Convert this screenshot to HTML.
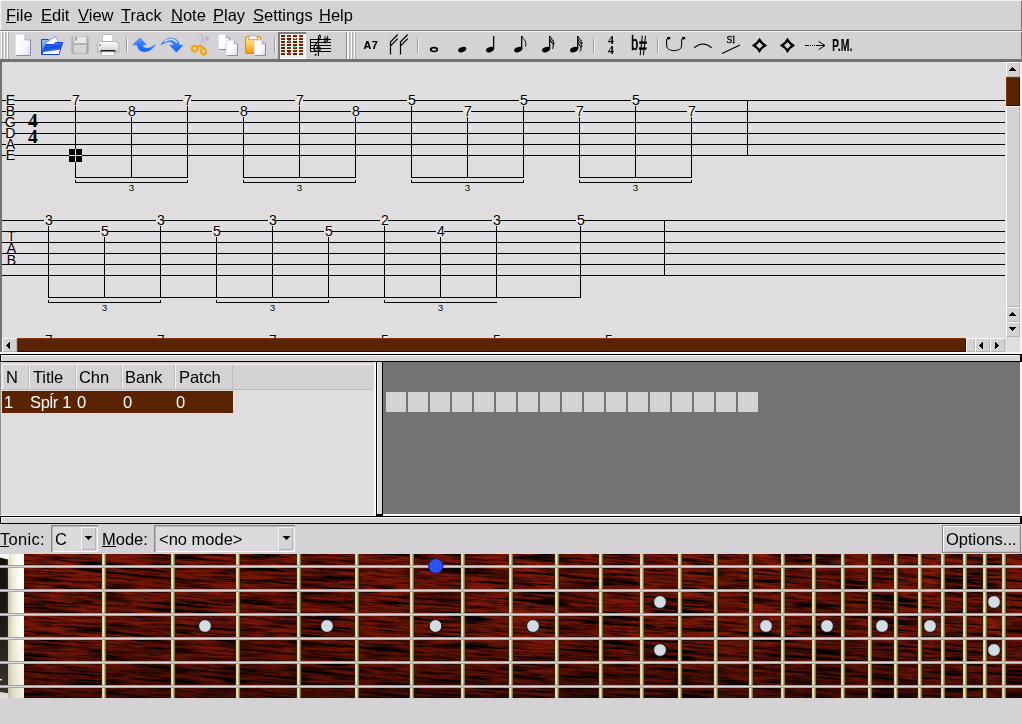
<!DOCTYPE html>
<html><head><meta charset="utf-8"><title>KGuitar</title>
<style>
html,body{margin:0;padding:0}
html{background:#d5d2d5}
body{width:1022px;height:724px;overflow:hidden;position:relative;background:#d5d2d5;
 font-family:"Liberation Sans",sans-serif;font-size:16.5px;color:#000;line-height:1}
.a{position:absolute}
.t{position:absolute;white-space:nowrap;transform-origin:0 0;line-height:20px;height:20px;will-change:transform}
.t u{text-decoration:none;background:linear-gradient(#000,#000) no-repeat 0 16px / 100% 1px}
svg{position:absolute;left:0;top:0;overflow:visible}
.btn{position:absolute;background:#d5d2d5;box-shadow:inset 1px 1px 0 #f4f3f4, inset -1px -1px 0 #b4b2b4}
</style></head><body>

<div class="a" style="left:0px;top:0px;width:1022px;height:1px;background:#f6f5f6;"></div>
<div class="a" style="left:0px;top:0px;width:1px;height:30px;background:#f6f5f6;"></div>
<div class="a" style="left:1021px;top:1px;width:1px;height:58px;background:#7d7d7b;"></div>
<div class="t" style="left:5.5px;top:5px"><u>F</u>ile</div>
<div class="t" style="left:41.1px;top:5px"><u>E</u>dit</div>
<div class="t" style="left:77.6px;top:5px"><u>V</u>iew</div>
<div class="t" style="left:121.2px;top:5px"><u>T</u>rack</div>
<div class="t" style="left:170.7px;top:5px"><u>N</u>ote</div>
<div class="t" style="left:212.7px;top:5px"><u>P</u>lay</div>
<div class="t" style="left:252.8px;top:5px"><u>S</u>ettings</div>
<div class="t" style="left:318.5px;top:5px"><u>H</u>elp</div>
<div class="a" style="left:0px;top:30px;width:1022px;height:1px;background:#7d7d7b;"></div>
<div class="a" style="left:0px;top:31px;width:1022px;height:1px;background:#f6f5f6;"></div>
<div class="a" style="left:1px;top:32px;width:1px;height:27px;background:#f6f5f6;"></div>
<div class="a" style="left:2px;top:32px;width:1px;height:27px;background:#aeacae;"></div>
<div class="a" style="left:4px;top:32px;width:1px;height:27px;background:#f6f5f6;"></div>
<div class="a" style="left:5px;top:32px;width:1px;height:27px;background:#aeacae;"></div>
<div class="a" style="left:7px;top:32px;width:1px;height:27px;background:#f6f5f6;"></div>
<div class="a" style="left:8px;top:32px;width:1px;height:27px;background:#aeacae;"></div>
<div class="a" style="left:346px;top:32px;width:1px;height:27px;background:#8a888a;"></div>
<div class="a" style="left:347px;top:32px;width:1px;height:27px;background:#f6f5f6;"></div>
<div class="a" style="left:348px;top:32px;width:1px;height:27px;background:#f6f5f6;"></div>
<div class="a" style="left:349px;top:32px;width:1px;height:27px;background:#aeacae;"></div>
<div class="a" style="left:351px;top:32px;width:1px;height:27px;background:#f6f5f6;"></div>
<div class="a" style="left:352px;top:32px;width:1px;height:27px;background:#aeacae;"></div>
<div class="a" style="left:354px;top:32px;width:1px;height:27px;background:#f6f5f6;"></div>
<div class="a" style="left:355px;top:32px;width:1px;height:27px;background:#aeacae;"></div>
<div class="a" style="left:126px;top:38px;width:1px;height:15px;background:#9a989a;"></div>
<div class="a" style="left:127px;top:38px;width:1px;height:15px;background:#f6f5f6;"></div>
<div class="a" style="left:274px;top:38px;width:1px;height:15px;background:#9a989a;"></div>
<div class="a" style="left:275px;top:38px;width:1px;height:15px;background:#f6f5f6;"></div>
<div class="a" style="left:417px;top:38px;width:1px;height:15px;background:#9a989a;"></div>
<div class="a" style="left:418px;top:38px;width:1px;height:15px;background:#f6f5f6;"></div>
<div class="a" style="left:593px;top:38px;width:1px;height:15px;background:#9a989a;"></div>
<div class="a" style="left:594px;top:38px;width:1px;height:15px;background:#f6f5f6;"></div>
<div class="a" style="left:657px;top:38px;width:1px;height:15px;background:#9a989a;"></div>
<div class="a" style="left:658px;top:38px;width:1px;height:15px;background:#f6f5f6;"></div>
<div class="a" style="left:278px;top:32px;width:28px;height:27px;background:#efeeef;box-shadow:inset 2px 2px 0 #7d7d7b, inset -1px -1px 0 #fff"></div>
<svg width="1022" height="62" viewBox="0 0 1022 62">
<defs>
<linearGradient id="gPage" x1="0" y1="0" x2="1" y2="1"><stop offset="0" stop-color="#ffffff"/><stop offset=".55" stop-color="#fbfaff"/><stop offset="1" stop-color="#dcdaec"/></linearGradient>
<linearGradient id="gFold" x1="0" y1="1" x2="1" y2="0"><stop offset="0" stop-color="#c8c6dc"/><stop offset="1" stop-color="#ffffff"/></linearGradient>
<linearGradient id="gFlap" x1="0" y1="0" x2="0.25" y2="1"><stop offset="0" stop-color="#7ab8ff"/><stop offset=".45" stop-color="#1048e0"/><stop offset=".72" stop-color="#2a6af0"/><stop offset=".8" stop-color="#eef0ff"/><stop offset="1" stop-color="#ffffff"/></linearGradient>
<linearGradient id="gBack" x1="0" y1="0" x2="0" y2="1"><stop offset="0" stop-color="#8cc4ff"/><stop offset="1" stop-color="#2060e8"/></linearGradient>
<linearGradient id="gFlop" x1="0" y1="0" x2="1" y2="1"><stop offset="0" stop-color="#bfbdbf"/><stop offset="1" stop-color="#9d9b9d"/></linearGradient>
<linearGradient id="gPrn" x1="0" y1="0" x2="0" y2="1"><stop offset="0" stop-color="#ffffff"/><stop offset="1" stop-color="#c9c9c9"/></linearGradient>
<linearGradient id="gArr" x1="0" y1="0" x2="0" y2="1"><stop offset="0" stop-color="#5aa4ff"/><stop offset=".5" stop-color="#2676ff"/><stop offset="1" stop-color="#1a62f4"/></linearGradient>
<linearGradient id="gClip" x1="0" y1="0" x2="0" y2="1"><stop offset="0" stop-color="#ffe680"/><stop offset=".45" stop-color="#ffd050"/><stop offset="1" stop-color="#f09208"/></linearGradient>
<linearGradient id="gBlade" x1="0" y1="0" x2="1" y2="0"><stop offset="0" stop-color="#ffffff"/><stop offset="1" stop-color="#a8a8c0"/></linearGradient>
</defs>
<path d="M15.5,34.5 H25 L30.5,40 V55.5 H15.5 Z" fill="url(#gPage)"/>
<path d="M30.5,40 V55.5 H15.8" fill="none" stroke="#8c8aa8" stroke-width="1"/>
<path d="M25,34.5 V40 H30.5 Z" fill="url(#gFold)" stroke="#a09eb8" stroke-width=".7"/>
<path d="M15.5,34.5 V55.2" fill="none" stroke="#e4e2f0" stroke-width="1"/>
<path d="M15.5,34.5 H25" fill="none" stroke="#e4e2f0" stroke-width="1"/>
<path d="M41.5,39.5 H48.5 L49.5,41.5 H57 V54.5 H41.5 Z" fill="url(#gBack)" stroke="#1448d8" stroke-width="1"/>
<path d="M45.5,42.8 L55.3,36.6 L59.2,42.4 L49,49 Z" fill="#fbfbff" stroke="#6f7ee0" stroke-width=".8"/>
<path d="M46,44.5 H53.5 L55.5,42.5 H62.6 L59,54.5 H41.8 Z" fill="url(#gFlap)" stroke="#1040d8" stroke-width="1"/>
<rect x="71.5" y="36.5" width="17" height="17" rx="1.6" fill="url(#gFlop)" stroke="#b3b1b3" stroke-width=".6"/>
<rect x="74" y="36.8" width="12.5" height="6.4" fill="#e9e7e9"/>
<rect x="75" y="37.2" width="2.2" height="3.4" fill="#a09ea0"/>
<rect x="73.8" y="45" width="12.6" height="8" fill="#d9d7d9"/>
<path d="M74,47.5 H86 M74,49.5 H86 M74,51.5 H86" stroke="#cfcdcf" stroke-width=".7"/>
<rect x="102.5" y="34.5" width="10.5" height="7.5" fill="#ffffff" stroke="#b5b3b5" stroke-width=".8"/>
<path d="M101.5,41.5 H114.5 C118,41.5 119,44 119,47 C119,51 118,53 115.5,53 H100.5 C98,53 97.3,51 97.3,47 C97.3,44 98,41.5 101.5,41.5 Z" fill="url(#gPrn)" stroke="#a3a1a3" stroke-width=".8"/>
<rect x="99" y="44" width="2" height="2" fill="#50d060"/>
<rect x="100.5" y="50" width="15" height="2.2" rx="1" fill="#1a1a1a"/>
<rect x="101.8" y="51.8" width="12.4" height="3.8" fill="#fafafa" stroke="#b5b3b5" stroke-width=".7"/>
<path d="M133,44.7 L139.8,37.9 L146.3,44.7 L142.3,44.7 C142.8,48.6 149,50.2 155,44.8 C150.5,53.5 138,54.5 137.2,44.7 Z" fill="url(#gArr)" stroke="#1f6cff" stroke-width=".6"/>
<path d="M161,45 C165,36.2 178.5,35.6 179.3,45.3 L183,45.3 L176.4,52.2 L169.8,45.3 L173.8,45.3 C173.2,41.2 167,40 161,45 Z" fill="url(#gArr)" stroke="#1f6cff" stroke-width=".6"/>
<path d="M165,41.3 C169,38.5 174.5,38.5 176.5,42.5" fill="none" stroke="#d8ecff" stroke-width="1.3" stroke-linecap="round"/>
<path d="M200.2,34.6 L202.3,34.8 L202.6,46.2 L200.4,46.6 Z" fill="url(#gBlade)" stroke="#9c9cb8" stroke-width=".5"/>
<path d="M207.4,36 L209,37.6 L201.6,47 L200.2,45.6 Z" fill="url(#gBlade)" stroke="#9c9cb8" stroke-width=".5"/>
<ellipse cx="194.6" cy="48.6" rx="2.9" ry="2.6" fill="none" stroke="#f7a400" stroke-width="2.1" transform="rotate(-25 194.6 48.6)"/>
<ellipse cx="203.4" cy="51.4" rx="2.4" ry="3.3" fill="none" stroke="#f7a400" stroke-width="2.1" transform="rotate(-15 203.4 51.4)"/>
<path d="M196.8,46.6 L201,45.4 L202.2,48.3" fill="none" stroke="#f7a400" stroke-width="2"/>
<path d="M218.5,34.5 H226 L229.5,38 V49.5 H218.5 Z" fill="url(#gPage)"/>
<path d="M229.5,38 V49.5 H218.8" fill="none" stroke="#8c8aa8" stroke-width="1"/>
<path d="M226,34.5 V38 H229.5 Z" fill="url(#gFold)" stroke="#a09eb8" stroke-width=".7"/>
<path d="M218.5,34.5 V49.2" fill="none" stroke="#e4e2f0" stroke-width="1"/>
<path d="M218.5,34.5 H226" fill="none" stroke="#e4e2f0" stroke-width="1"/>
<path d="M226.5,40.5 H234 L237.5,44 V55.5 H226.5 Z" fill="url(#gPage)"/>
<path d="M237.5,44 V55.5 H226.8" fill="none" stroke="#8c8aa8" stroke-width="1"/>
<path d="M234,40.5 V44 H237.5 Z" fill="url(#gFold)" stroke="#a09eb8" stroke-width=".7"/>
<path d="M226.5,40.5 V55.2" fill="none" stroke="#e4e2f0" stroke-width="1"/>
<path d="M226.5,40.5 H234" fill="none" stroke="#e4e2f0" stroke-width="1"/>
<rect x="245.5" y="36.5" width="15" height="17" rx="1.5" fill="url(#gClip)" stroke="#d88a08" stroke-width="1"/>
<path d="M248.4,39.6 C248.4,33.6 257.6,33.6 257.6,39.6 Z" fill="#f4f4fa" stroke="#9a9ab4" stroke-width=".8"/>
<path d="M254.5,40.5 H262 L265.5,44 V55.5 H254.5 Z" fill="url(#gPage)"/>
<path d="M265.5,44 V55.5 H254.8" fill="none" stroke="#8c8aa8" stroke-width="1"/>
<path d="M262,40.5 V44 H265.5 Z" fill="url(#gFold)" stroke="#a09eb8" stroke-width=".7"/>
<path d="M254.5,40.5 V55.2" fill="none" stroke="#e4e2f0" stroke-width="1"/>
<path d="M254.5,40.5 H262" fill="none" stroke="#e4e2f0" stroke-width="1"/>
<rect x="281" y="35" width="4" height="2" fill="#5c1c00"/>
<rect x="281" y="38" width="4" height="2" fill="#7a2c04"/>
<rect x="281" y="41" width="4" height="2" fill="#6a2400"/>
<rect x="281" y="44" width="4" height="2" fill="#80340a"/>
<rect x="281" y="47" width="4" height="2" fill="#5c1c00"/>
<rect x="281" y="50" width="4" height="2" fill="#7a2c04"/>
<rect x="281" y="53" width="4" height="2" fill="#6a2400"/>
<rect x="287" y="35" width="4" height="2" fill="#80340a"/>
<rect x="287" y="38" width="4" height="2" fill="#5c1c00"/>
<rect x="287" y="41" width="4" height="2" fill="#7a2c04"/>
<rect x="287" y="44" width="4" height="2" fill="#6a2400"/>
<rect x="287" y="47" width="4" height="2" fill="#80340a"/>
<rect x="287" y="50" width="4" height="2" fill="#5c1c00"/>
<rect x="287" y="53" width="4" height="2" fill="#7a2c04"/>
<rect x="293" y="35" width="4" height="2" fill="#6a2400"/>
<rect x="293" y="38" width="4" height="2" fill="#80340a"/>
<rect x="293" y="41" width="4" height="2" fill="#5c1c00"/>
<rect x="293" y="44" width="4" height="2" fill="#7a2c04"/>
<rect x="293" y="47" width="4" height="2" fill="#6a2400"/>
<rect x="293" y="50" width="4" height="2" fill="#80340a"/>
<rect x="293" y="53" width="4" height="2" fill="#5c1c00"/>
<rect x="299" y="35" width="4" height="2" fill="#7a2c04"/>
<rect x="299" y="38" width="4" height="2" fill="#6a2400"/>
<rect x="299" y="41" width="4" height="2" fill="#80340a"/>
<rect x="299" y="44" width="4" height="2" fill="#5c1c00"/>
<rect x="299" y="47" width="4" height="2" fill="#7a2c04"/>
<rect x="299" y="50" width="4" height="2" fill="#6a2400"/>
<rect x="299" y="53" width="4" height="2" fill="#80340a"/>
<rect x="294" y="37" width="2" height="2" fill="#f2e020"/>
<rect x="288" y="40" width="2" height="2" fill="#3a8cf0"/>
<rect x="294" y="46" width="2" height="2" fill="#28d030"/>
<rect x="288" y="52" width="2" height="2" fill="#f02020"/>
<g shape-rendering="crispEdges" stroke="#000" stroke-width="1"><path d="M310,39.5 H331 M310,42.5 H331 M310,45.5 H331 M310,48.5 H331 M310,51.5 H331 M310.5,39 V52"/></g>
<path d="M318.4,56 V38.5 C318.2,34.6 320.6,34 320.4,37 C320,41.5 313.4,44 314,48.6 C314.6,52.4 320.8,52.2 320.4,48.4 C320,46 316.6,46.2 317,48.6" fill="none" stroke="#000" stroke-width="1.1"/>
<circle cx="315.6" cy="54.8" r="1" fill="#000"/>
<path d="M325,36.5 L324.6,43.5 M327.4,35.8 L327,42.8 M323.6,39.6 L328.6,38 M323.4,42 L328.4,40.4" fill="none" stroke="#000" stroke-width=".9"/>
<text x="363.4" y="48.8" font-family="Liberation Sans, sans-serif" font-weight="bold" font-size="10.8" letter-spacing=".6" fill="#000" stroke="#000" stroke-width=".2">A7</text>
<g stroke="#000" stroke-width="1.2" fill="none" stroke-linecap="square"><path d="M390.5,42 V54 M390.5,42 L397.3,35 M390.5,46 L397.3,39"/><path d="M400.5,42 V54 M400.5,42 L407.3,35 M400.5,46 L407.3,39"/></g>
<ellipse cx="434" cy="49.6" rx="3.3" ry="1.9" fill="none" stroke="#000" stroke-width="1.7"/>
<ellipse cx="462.2" cy="49.6" rx="4.25" ry="2.45" fill="#000" transform="rotate(-20 462.2 49.6)"/>
<ellipse cx="490" cy="49.6" rx="4.25" ry="2.45" fill="#000" transform="rotate(-20 490 49.6)"/>
<rect x="493" y="36" width="1.3" height="13" fill="#000"/>
<ellipse cx="518.2" cy="49.6" rx="4.25" ry="2.45" fill="#000" transform="rotate(-20 518.2 49.6)"/>
<rect x="521" y="36" width="1.3" height="13" fill="#000"/>
<path d="M521.8,36.2 C523,39 527.6,41.5 525.2,46.6" fill="none" stroke="#000" stroke-width="1"/>
<ellipse cx="546" cy="49.6" rx="4.25" ry="2.45" fill="#000" transform="rotate(-20 546 49.6)"/>
<rect x="549" y="36" width="1.3" height="13" fill="#000"/>
<path d="M549.8,36.2 C551,39 555.2,41 553.4,45 M549.8,39.6 C551,42 555,44 552.4,48.6" fill="none" stroke="#000" stroke-width="1.3" stroke-dasharray="1.8 .5"/>
<ellipse cx="574" cy="49.6" rx="4.25" ry="2.45" fill="#000" transform="rotate(-20 574 49.6)"/>
<rect x="577" y="36" width="1.3" height="13" fill="#000"/>
<path d="M577.8,36.2 C579,39 583,40.5 581.6,44 M577.8,39.4 C579,42 583,43.5 581.2,47.5 M577.8,42.6 C579,45 582.4,46.5 580.2,51.6" fill="none" stroke="#000" stroke-width="1.3" stroke-dasharray="1.8 .5"/>
<text x="611" y="43.6" text-anchor="middle" font-family="Liberation Serif, serif" font-weight="bold" font-size="11.8" fill="#000">4</text>
<text x="611" y="53.8" text-anchor="middle" font-family="Liberation Serif, serif" font-weight="bold" font-size="11.8" fill="#000">4</text>
<path d="M666.6,39 V45.6 C666.6,52.4 681.6,52.4 681.6,45.6 V39" fill="none" stroke="#000" stroke-width="1.05"/>
<rect x="667" y="37" width="3.2" height="2.4" fill="#000"/><rect x="682" y="37" width="3.2" height="2.4" fill="#000"/>
<path d="M694,47.9 Q703,40.2 711.8,47.9" fill="none" stroke="#000" stroke-width="1.05"/>
<text x="726.4" y="42.8" font-family="Liberation Serif, serif" font-size="10.6" fill="#000" stroke="#000" stroke-width=".3">Sl</text>
<path d="M722,53.6 L740,45" fill="none" stroke="#000" stroke-width="1.1"/>
<path fill-rule="evenodd" fill="#000" d="M751.9,45.4 Q756.9,42.8 759.5,37.8 Q762.1,42.8 767.1,45.4 Q762.1,48 759.5,53 Q756.9,48 751.9,45.4 Z M756.1,45.4 L759.5,42 L762.9,45.4 L759.5,48.8 Z"/>
<path fill-rule="evenodd" fill="#000" d="M779.9,45.4 Q784.9,42.8 787.5,37.8 Q790.1,42.8 795.1,45.4 Q790.1,48 787.5,53 Q784.9,48 779.9,45.4 Z M784.1,45.4 L787.5,42 L790.9,45.4 L787.5,48.8 Z"/>
<path d="M805,45.5 H809" stroke="#000" stroke-width="1"/><path d="M810,45.5 H817" stroke="#000" stroke-width="1" stroke-dasharray="1 1"/><path d="M817,45.5 H825 M818.6,41.4 L825,45.5 L818.6,49.6" fill="none" stroke="#000" stroke-width="1"/>
</svg>
<div class="t" style="left:631.2px;top:30.5px;font-size:20.5px;line-height:24px;height:24px;transform:scaleX(.62);-webkit-text-stroke:.7px #000">b</div>
<div class="t" style="left:639.2px;top:30.2px;font-size:28px;line-height:32px;height:32px;transform:scaleX(.5);-webkit-text-stroke:.6px #000">#</div>
<div class="t" style="left:832.3px;top:35px;font-weight:bold;font-size:16.5px;transform:scaleX(.64)">P.M.</div>
<div class="a" style="left:0px;top:59px;width:1022px;height:293px;background:#dfdddf;"></div>
<div class="a" style="left:0px;top:59px;width:1022px;height:3px;background:#70726e;"></div>
<div class="a" style="left:0px;top:59px;width:2px;height:293px;background:#70726e;"></div>
<div class="a" style="left:1020px;top:62px;width:2px;height:292px;background:#f6f5f6;"></div>
<div class="a" style="left:0px;top:352px;width:1022px;height:2px;background:#fbfafb;"></div>
<div class="a" style="left:1006px;top:62px;width:14px;height:15px;background:#d5d2d5;box-shadow:inset 1px 1px 0 #fcfafc, inset -1px -1px 0 #b6b4b6"></div>
<div class="a" style="left:1006px;top:77px;width:14px;height:29px;background:#5a2400;box-shadow:inset 1px 1px 0 #84380a, inset -1px -1px 0 #2c0e00"></div>
<div class="a" style="left:1006px;top:106px;width:14px;height:201px;background:#d5d2d5;box-shadow:inset 1px 1px 0 #fcfafc, inset -1px -1px 0 #b6b4b6"></div>
<div class="a" style="left:1006px;top:307px;width:14px;height:15px;background:#d5d2d5;box-shadow:inset 1px 1px 0 #fcfafc, inset -1px -1px 0 #b6b4b6"></div>
<div class="a" style="left:1006px;top:322px;width:14px;height:15px;background:#d5d2d5;box-shadow:inset 1px 1px 0 #fcfafc, inset -1px -1px 0 #b6b4b6"></div>
<div class="a" style="left:2px;top:338px;width:15px;height:14px;background:#d5d2d5;box-shadow:inset 1px 1px 0 #fcfafc, inset -1px -1px 0 #b6b4b6"></div>
<div class="a" style="left:17px;top:338px;width:949px;height:14px;background:#5a2400;box-shadow:inset 1px 1px 0 #84380a, inset -1px -1px 0 #2c0e00"></div>
<div class="a" style="left:966px;top:338px;width:9px;height:14px;background:#d5d2d5;box-shadow:inset 1px 1px 0 #fcfafc, inset -1px -1px 0 #b6b4b6"></div>
<div class="a" style="left:975px;top:338px;width:15px;height:14px;background:#d5d2d5;box-shadow:inset 1px 1px 0 #fcfafc, inset -1px -1px 0 #b6b4b6"></div>
<div class="a" style="left:990px;top:338px;width:15px;height:14px;background:#d5d2d5;box-shadow:inset 1px 1px 0 #fcfafc, inset -1px -1px 0 #b6b4b6"></div>
<svg width="1022" height="360" viewBox="0 0 1022 360"><defs><clipPath id="tc"><rect x="2" y="62" width="1003" height="276"/></clipPath></defs>
<rect x="1012" y="67" width="1" height="1" fill="#000"/><rect x="1011" y="68" width="3" height="1" fill="#000"/><rect x="1010" y="69" width="5" height="1" fill="#000"/><rect x="1009" y="70" width="7" height="1" fill="#000"/><rect x="1012" y="312" width="1" height="1" fill="#000"/><rect x="1011" y="313" width="3" height="1" fill="#000"/><rect x="1010" y="314" width="5" height="1" fill="#000"/><rect x="1009" y="315" width="7" height="1" fill="#000"/><rect x="1009" y="327" width="7" height="1" fill="#000"/><rect x="1010" y="328" width="5" height="1" fill="#000"/><rect x="1011" y="329" width="3" height="1" fill="#000"/><rect x="1012" y="330" width="1" height="1" fill="#000"/><rect x="6" y="345" width="1" height="1" fill="#000"/><rect x="7" y="344" width="1" height="3" fill="#000"/><rect x="8" y="343" width="1" height="5" fill="#000"/><rect x="9" y="342" width="1" height="7" fill="#000"/><rect x="979" y="345" width="1" height="1" fill="#000"/><rect x="980" y="344" width="1" height="3" fill="#000"/><rect x="981" y="343" width="1" height="5" fill="#000"/><rect x="982" y="342" width="1" height="7" fill="#000"/><rect x="995" y="342" width="1" height="7" fill="#000"/><rect x="996" y="343" width="1" height="5" fill="#000"/><rect x="997" y="344" width="1" height="3" fill="#000"/><rect x="998" y="345" width="1" height="1" fill="#000"/>
<g clip-path="url(#tc)">
<rect x="9" y="231.6" width="4" height="8" fill="#f3f2f3"/>
<text x="11.4" y="240.6" font-family="Liberation Sans, sans-serif" font-size="14" text-anchor="middle" fill="#000">T</text>
<rect x="9" y="244" width="4" height="8" fill="#f3f2f3"/>
<text x="11.4" y="253" font-family="Liberation Sans, sans-serif" font-size="14" text-anchor="middle" fill="#000">A</text>
<rect x="9" y="256" width="4" height="8" fill="#f3f2f3"/>
<text x="11.4" y="265" font-family="Liberation Sans, sans-serif" font-size="14" text-anchor="middle" fill="#000">B</text>
<rect x="2" y="100" width="1003" height="1" fill="#000"/>
<rect x="2" y="111" width="1003" height="1" fill="#000"/>
<rect x="2" y="122" width="1003" height="1" fill="#000"/>
<rect x="2" y="133" width="1003" height="1" fill="#000"/>
<rect x="2" y="144" width="1003" height="1" fill="#000"/>
<rect x="2" y="155" width="1003" height="1" fill="#000"/>
<rect x="747" y="100" width="1" height="56" fill="#000"/>
<rect x="75" y="106" width="1" height="72" fill="#000"/>
<rect x="131" y="117" width="1" height="61" fill="#000"/>
<rect x="187" y="106" width="1" height="72" fill="#000"/>
<rect x="243" y="117" width="1" height="61" fill="#000"/>
<rect x="299" y="106" width="1" height="72" fill="#000"/>
<rect x="355" y="117" width="1" height="61" fill="#000"/>
<rect x="411" y="106" width="1" height="72" fill="#000"/>
<rect x="467" y="117" width="1" height="61" fill="#000"/>
<rect x="523" y="106" width="1" height="72" fill="#000"/>
<rect x="579" y="117" width="1" height="61" fill="#000"/>
<rect x="635" y="106" width="1" height="72" fill="#000"/>
<rect x="691" y="117" width="1" height="61" fill="#000"/>
<rect x="75" y="177" width="113" height="1" fill="#000"/>
<rect x="243" y="177" width="113" height="1" fill="#000"/>
<rect x="411" y="177" width="113" height="1" fill="#000"/>
<rect x="579" y="177" width="113" height="1" fill="#000"/>
<rect x="75" y="182" width="113" height="1" fill="#000"/>
<rect x="75" y="180" width="1" height="3" fill="#000"/>
<rect x="187" y="180" width="1" height="3" fill="#000"/>
<rect x="130" y="185" width="3" height="5" fill="#f3f2f3"/>
<text x="131.5" y="191" font-family="Liberation Sans, sans-serif" font-size="9.8" text-anchor="middle" fill="#000">3</text>
<rect x="243" y="182" width="113" height="1" fill="#000"/>
<rect x="243" y="180" width="1" height="3" fill="#000"/>
<rect x="355" y="180" width="1" height="3" fill="#000"/>
<rect x="298" y="185" width="3" height="5" fill="#f3f2f3"/>
<text x="299.5" y="191" font-family="Liberation Sans, sans-serif" font-size="9.8" text-anchor="middle" fill="#000">3</text>
<rect x="411" y="182" width="113" height="1" fill="#000"/>
<rect x="411" y="180" width="1" height="3" fill="#000"/>
<rect x="523" y="180" width="1" height="3" fill="#000"/>
<rect x="466" y="185" width="3" height="5" fill="#f3f2f3"/>
<text x="467.5" y="191" font-family="Liberation Sans, sans-serif" font-size="9.8" text-anchor="middle" fill="#000">3</text>
<rect x="579" y="182" width="113" height="1" fill="#000"/>
<rect x="579" y="180" width="1" height="3" fill="#000"/>
<rect x="691" y="180" width="1" height="3" fill="#000"/>
<rect x="634" y="185" width="3" height="5" fill="#f3f2f3"/>
<text x="635.5" y="191" font-family="Liberation Sans, sans-serif" font-size="9.8" text-anchor="middle" fill="#000">3</text>
<rect x="71" y="100" width="8" height="1" fill="#f3f2f3"/>
<rect x="74" y="96" width="4" height="8" fill="#f3f2f3"/>
<text x="76" y="105" font-family="Liberation Sans, sans-serif" font-size="14" text-anchor="middle" fill="#000">7</text>
<rect x="127" y="111" width="8" height="1" fill="#f3f2f3"/>
<rect x="130" y="107" width="4" height="8" fill="#f3f2f3"/>
<text x="132" y="116" font-family="Liberation Sans, sans-serif" font-size="14" text-anchor="middle" fill="#000">8</text>
<rect x="183" y="100" width="8" height="1" fill="#f3f2f3"/>
<rect x="186" y="96" width="4" height="8" fill="#f3f2f3"/>
<text x="188" y="105" font-family="Liberation Sans, sans-serif" font-size="14" text-anchor="middle" fill="#000">7</text>
<rect x="239" y="111" width="8" height="1" fill="#f3f2f3"/>
<rect x="242" y="107" width="4" height="8" fill="#f3f2f3"/>
<text x="244" y="116" font-family="Liberation Sans, sans-serif" font-size="14" text-anchor="middle" fill="#000">8</text>
<rect x="295" y="100" width="8" height="1" fill="#f3f2f3"/>
<rect x="298" y="96" width="4" height="8" fill="#f3f2f3"/>
<text x="300" y="105" font-family="Liberation Sans, sans-serif" font-size="14" text-anchor="middle" fill="#000">7</text>
<rect x="351" y="111" width="8" height="1" fill="#f3f2f3"/>
<rect x="354" y="107" width="4" height="8" fill="#f3f2f3"/>
<text x="356" y="116" font-family="Liberation Sans, sans-serif" font-size="14" text-anchor="middle" fill="#000">8</text>
<rect x="407" y="100" width="8" height="1" fill="#f3f2f3"/>
<rect x="410" y="96" width="4" height="8" fill="#f3f2f3"/>
<text x="412" y="105" font-family="Liberation Sans, sans-serif" font-size="14" text-anchor="middle" fill="#000">5</text>
<rect x="463" y="111" width="8" height="1" fill="#f3f2f3"/>
<rect x="466" y="107" width="4" height="8" fill="#f3f2f3"/>
<text x="468" y="116" font-family="Liberation Sans, sans-serif" font-size="14" text-anchor="middle" fill="#000">7</text>
<rect x="519" y="100" width="8" height="1" fill="#f3f2f3"/>
<rect x="522" y="96" width="4" height="8" fill="#f3f2f3"/>
<text x="524" y="105" font-family="Liberation Sans, sans-serif" font-size="14" text-anchor="middle" fill="#000">5</text>
<rect x="575" y="111" width="8" height="1" fill="#f3f2f3"/>
<rect x="578" y="107" width="4" height="8" fill="#f3f2f3"/>
<text x="580" y="116" font-family="Liberation Sans, sans-serif" font-size="14" text-anchor="middle" fill="#000">7</text>
<rect x="631" y="100" width="8" height="1" fill="#f3f2f3"/>
<rect x="634" y="96" width="4" height="8" fill="#f3f2f3"/>
<text x="636" y="105" font-family="Liberation Sans, sans-serif" font-size="14" text-anchor="middle" fill="#000">5</text>
<rect x="687" y="111" width="8" height="1" fill="#f3f2f3"/>
<rect x="690" y="107" width="4" height="8" fill="#f3f2f3"/>
<text x="692" y="116" font-family="Liberation Sans, sans-serif" font-size="14" text-anchor="middle" fill="#000">7</text>
<rect x="2" y="220" width="1003" height="1" fill="#000"/>
<rect x="2" y="231" width="1003" height="1" fill="#000"/>
<rect x="2" y="242" width="1003" height="1" fill="#000"/>
<rect x="2" y="253" width="1003" height="1" fill="#000"/>
<rect x="2" y="264" width="1003" height="1" fill="#000"/>
<rect x="2" y="275" width="1003" height="1" fill="#000"/>
<rect x="664" y="220" width="1" height="56" fill="#000"/>
<rect x="48" y="226" width="1" height="72" fill="#000"/>
<rect x="104" y="237" width="1" height="61" fill="#000"/>
<rect x="160" y="226" width="1" height="72" fill="#000"/>
<rect x="216" y="237" width="1" height="61" fill="#000"/>
<rect x="272" y="226" width="1" height="72" fill="#000"/>
<rect x="328" y="237" width="1" height="61" fill="#000"/>
<rect x="384" y="226" width="1" height="72" fill="#000"/>
<rect x="440" y="237" width="1" height="61" fill="#000"/>
<rect x="496" y="226" width="1" height="72" fill="#000"/>
<rect x="580" y="226" width="1" height="72" fill="#000"/>
<rect x="48" y="297" width="533" height="1" fill="#000"/>
<rect x="48" y="302" width="113" height="1" fill="#000"/>
<rect x="48" y="300" width="1" height="3" fill="#000"/>
<rect x="160" y="300" width="1" height="3" fill="#000"/>
<rect x="103" y="305" width="3" height="5" fill="#f3f2f3"/>
<text x="104.5" y="311" font-family="Liberation Sans, sans-serif" font-size="9.8" text-anchor="middle" fill="#000">3</text>
<rect x="216" y="302" width="113" height="1" fill="#000"/>
<rect x="216" y="300" width="1" height="3" fill="#000"/>
<rect x="328" y="300" width="1" height="3" fill="#000"/>
<rect x="271" y="305" width="3" height="5" fill="#f3f2f3"/>
<text x="272.5" y="311" font-family="Liberation Sans, sans-serif" font-size="9.8" text-anchor="middle" fill="#000">3</text>
<rect x="384" y="302" width="113" height="1" fill="#000"/>
<rect x="384" y="300" width="1" height="3" fill="#000"/>
<rect x="439" y="305" width="3" height="5" fill="#f3f2f3"/>
<text x="440.5" y="311" font-family="Liberation Sans, sans-serif" font-size="9.8" text-anchor="middle" fill="#000">3</text>
<rect x="44" y="220" width="8" height="1" fill="#f3f2f3"/>
<rect x="47" y="216" width="4" height="8" fill="#f3f2f3"/>
<text x="49" y="225" font-family="Liberation Sans, sans-serif" font-size="14" text-anchor="middle" fill="#000">3</text>
<rect x="100" y="231" width="8" height="1" fill="#f3f2f3"/>
<rect x="103" y="227" width="4" height="8" fill="#f3f2f3"/>
<text x="105" y="236" font-family="Liberation Sans, sans-serif" font-size="14" text-anchor="middle" fill="#000">5</text>
<rect x="156" y="220" width="8" height="1" fill="#f3f2f3"/>
<rect x="159" y="216" width="4" height="8" fill="#f3f2f3"/>
<text x="161" y="225" font-family="Liberation Sans, sans-serif" font-size="14" text-anchor="middle" fill="#000">3</text>
<rect x="212" y="231" width="8" height="1" fill="#f3f2f3"/>
<rect x="215" y="227" width="4" height="8" fill="#f3f2f3"/>
<text x="217" y="236" font-family="Liberation Sans, sans-serif" font-size="14" text-anchor="middle" fill="#000">5</text>
<rect x="268" y="220" width="8" height="1" fill="#f3f2f3"/>
<rect x="271" y="216" width="4" height="8" fill="#f3f2f3"/>
<text x="273" y="225" font-family="Liberation Sans, sans-serif" font-size="14" text-anchor="middle" fill="#000">3</text>
<rect x="324" y="231" width="8" height="1" fill="#f3f2f3"/>
<rect x="327" y="227" width="4" height="8" fill="#f3f2f3"/>
<text x="329" y="236" font-family="Liberation Sans, sans-serif" font-size="14" text-anchor="middle" fill="#000">5</text>
<rect x="380" y="220" width="8" height="1" fill="#f3f2f3"/>
<rect x="383" y="216" width="4" height="8" fill="#f3f2f3"/>
<text x="385" y="225" font-family="Liberation Sans, sans-serif" font-size="14" text-anchor="middle" fill="#000">2</text>
<rect x="436" y="231" width="8" height="1" fill="#f3f2f3"/>
<rect x="439" y="227" width="4" height="8" fill="#f3f2f3"/>
<text x="441" y="236" font-family="Liberation Sans, sans-serif" font-size="14" text-anchor="middle" fill="#000">4</text>
<rect x="492" y="220" width="8" height="1" fill="#f3f2f3"/>
<rect x="495" y="216" width="4" height="8" fill="#f3f2f3"/>
<text x="497" y="225" font-family="Liberation Sans, sans-serif" font-size="14" text-anchor="middle" fill="#000">3</text>
<rect x="576" y="220" width="8" height="1" fill="#f3f2f3"/>
<rect x="579" y="216" width="4" height="8" fill="#f3f2f3"/>
<text x="581" y="225" font-family="Liberation Sans, sans-serif" font-size="14" text-anchor="middle" fill="#000">5</text>
<rect x="44" y="340" width="8" height="1" fill="#f3f2f3"/>
<rect x="47" y="336" width="4" height="8" fill="#f3f2f3"/>
<text x="49" y="345" font-family="Liberation Sans, sans-serif" font-size="14" text-anchor="middle" fill="#000">7</text>
<rect x="156" y="340" width="8" height="1" fill="#f3f2f3"/>
<rect x="159" y="336" width="4" height="8" fill="#f3f2f3"/>
<text x="161" y="345" font-family="Liberation Sans, sans-serif" font-size="14" text-anchor="middle" fill="#000">7</text>
<rect x="268" y="340" width="8" height="1" fill="#f3f2f3"/>
<rect x="271" y="336" width="4" height="8" fill="#f3f2f3"/>
<text x="273" y="345" font-family="Liberation Sans, sans-serif" font-size="14" text-anchor="middle" fill="#000">7</text>
<rect x="380" y="340" width="8" height="1" fill="#f3f2f3"/>
<rect x="383" y="336" width="4" height="8" fill="#f3f2f3"/>
<text x="385" y="345" font-family="Liberation Sans, sans-serif" font-size="14" text-anchor="middle" fill="#000">5</text>
<rect x="492" y="340" width="8" height="1" fill="#f3f2f3"/>
<rect x="495" y="336" width="4" height="8" fill="#f3f2f3"/>
<text x="497" y="345" font-family="Liberation Sans, sans-serif" font-size="14" text-anchor="middle" fill="#000">5</text>
<rect x="604" y="340" width="8" height="1" fill="#f3f2f3"/>
<rect x="607" y="336" width="4" height="8" fill="#f3f2f3"/>
<text x="609" y="345" font-family="Liberation Sans, sans-serif" font-size="14" text-anchor="middle" fill="#000">5</text>
<rect x="6" y="100" width="8" height="1" fill="#f3f2f3"/>
<rect x="8" y="96" width="4" height="8" fill="#f3f2f3"/>
<text x="10.3" y="105" font-family="Liberation Sans, sans-serif" font-size="14" text-anchor="middle" fill="#000">E</text>
<rect x="6" y="111" width="8" height="1" fill="#f3f2f3"/>
<rect x="8" y="107" width="4" height="8" fill="#f3f2f3"/>
<text x="10.3" y="116" font-family="Liberation Sans, sans-serif" font-size="14" text-anchor="middle" fill="#000">B</text>
<rect x="6" y="122" width="8" height="1" fill="#f3f2f3"/>
<rect x="8" y="118" width="4" height="8" fill="#f3f2f3"/>
<text x="10.3" y="127" font-family="Liberation Sans, sans-serif" font-size="14" text-anchor="middle" fill="#000">G</text>
<rect x="6" y="133" width="8" height="1" fill="#f3f2f3"/>
<rect x="8" y="129" width="4" height="8" fill="#f3f2f3"/>
<text x="10.3" y="138" font-family="Liberation Sans, sans-serif" font-size="14" text-anchor="middle" fill="#000">D</text>
<rect x="6" y="144" width="8" height="1" fill="#f3f2f3"/>
<rect x="8" y="140" width="4" height="8" fill="#f3f2f3"/>
<text x="10.3" y="149" font-family="Liberation Sans, sans-serif" font-size="14" text-anchor="middle" fill="#000">A</text>
<rect x="6" y="155" width="8" height="1" fill="#f3f2f3"/>
<rect x="8" y="151" width="4" height="8" fill="#f3f2f3"/>
<text x="10.3" y="160" font-family="Liberation Sans, sans-serif" font-size="14" text-anchor="middle" fill="#000">E</text>
<text x="33" y="126.6" text-anchor="middle" font-family="Liberation Serif, serif" font-weight="bold" font-size="19.6" fill="#000">4</text>
<text x="33" y="142.6" text-anchor="middle" font-family="Liberation Serif, serif" font-weight="bold" font-size="19.6" fill="#000">4</text>
<rect x="69" y="149" width="13" height="13" fill="#000"/><rect x="75" y="149" width="1" height="13" fill="#dfdddf"/><rect x="69" y="155" width="13" height="1" fill="#dfdddf"/>
</g></svg>
<div class="a" style="left:0px;top:354px;width:1022px;height:8px;background:#d8d6d8;"></div>
<div class="a" style="left:0px;top:354px;width:1022px;height:1px;background:#000;"></div>
<div class="a" style="left:0px;top:361px;width:1022px;height:1px;background:#000;"></div>
<div class="a" style="left:0px;top:354px;width:1px;height:8px;background:#000;"></div>
<div class="a" style="left:1020px;top:354px;width:2px;height:8px;background:#000;"></div>
<div class="a" style="left:1px;top:355px;width:1019px;height:1px;background:#fbfafb;"></div>
<div class="a" style="left:1px;top:355px;width:1px;height:6px;background:#fbfafb;"></div>
<div class="a" style="left:0px;top:362px;width:1px;height:153px;background:#8e908c;"></div>
<div class="a" style="left:1px;top:362px;width:373px;height:153px;background:#dfdddf;"></div>
<div class="a" style="left:374px;top:362px;width:2px;height:154px;background:#fbfafb;"></div>
<div class="a" style="left:2px;top:515px;width:374px;height:1px;background:#fbfafb;"></div>
<div class="a" style="left:2px;top:362px;width:372px;height:27px;background:#d5d2d5;"></div>
<div class="a" style="left:2px;top:389px;width:371px;height:1px;background:#bdbbbd;"></div>
<div class="a" style="left:2px;top:364px;width:371px;height:1px;background:#f6f0f4;"></div>
<div class="a" style="left:28px;top:365px;width:1px;height:24px;background:#bdbbbd;"></div>
<div class="a" style="left:2px;top:365px;width:1px;height:24px;background:#f3f2f3;"></div>
<div class="a" style="left:75px;top:365px;width:1px;height:24px;background:#bdbbbd;"></div>
<div class="a" style="left:29px;top:365px;width:1px;height:24px;background:#f3f2f3;"></div>
<div class="a" style="left:121px;top:365px;width:1px;height:24px;background:#bdbbbd;"></div>
<div class="a" style="left:76px;top:365px;width:1px;height:24px;background:#f3f2f3;"></div>
<div class="a" style="left:174px;top:365px;width:1px;height:24px;background:#bdbbbd;"></div>
<div class="a" style="left:122px;top:365px;width:1px;height:24px;background:#f3f2f3;"></div>
<div class="a" style="left:232px;top:365px;width:1px;height:24px;background:#bdbbbd;"></div>
<div class="a" style="left:175px;top:365px;width:1px;height:24px;background:#f3f2f3;"></div>
<div class="t" style="left:6.1px;top:367px;letter-spacing:-.1px">N</div>
<div class="t" style="left:32.6px;top:367px;letter-spacing:-.1px">Title</div>
<div class="t" style="left:79.3px;top:367px;letter-spacing:-.1px">Chn</div>
<div class="t" style="left:125.4px;top:367px;letter-spacing:-.1px">Bank</div>
<div class="t" style="left:178.7px;top:367px;letter-spacing:-.1px">Patch</div>
<div class="a" style="left:2px;top:391px;width:231px;height:22px;background:#5a2400;"></div>
<div class="t" style="left:4.2px;top:392px;color:#fff;letter-spacing:-.35px">1</div>
<div class="t" style="left:29.5px;top:392px;color:#fff;letter-spacing:-.35px">Spĺr 1</div>
<div class="t" style="left:77px;top:392px;color:#fff;letter-spacing:-.35px">0</div>
<div class="t" style="left:122.8px;top:392px;color:#fff;letter-spacing:-.35px">0</div>
<div class="t" style="left:175.6px;top:392px;color:#fff;letter-spacing:-.35px">0</div>
<div class="a" style="left:376px;top:362px;width:7px;height:154px;background:#d8d6d8;"></div>
<div class="a" style="left:376px;top:362px;width:1px;height:154px;background:#000;"></div>
<div class="a" style="left:382px;top:362px;width:1px;height:154px;background:#000;"></div>
<div class="a" style="left:377px;top:362px;width:1px;height:154px;background:#fbfafb;"></div>
<div class="a" style="left:376px;top:514px;width:7px;height:2px;background:#000;"></div>
<div class="a" style="left:383px;top:362px;width:637px;height:152px;background:#737572;"></div>
<div class="a" style="left:383px;top:514px;width:639px;height:2px;background:#fbfafb;"></div>
<div class="a" style="left:1020px;top:362px;width:2px;height:154px;background:#fbfafb;"></div>
<div class="a" style="left:386px;top:392px;width:20px;height:20px;background:#d5d2d5;"></div>
<div class="a" style="left:408px;top:392px;width:20px;height:20px;background:#d5d2d5;"></div>
<div class="a" style="left:430px;top:392px;width:20px;height:20px;background:#d5d2d5;"></div>
<div class="a" style="left:452px;top:392px;width:20px;height:20px;background:#d5d2d5;"></div>
<div class="a" style="left:474px;top:392px;width:20px;height:20px;background:#d5d2d5;"></div>
<div class="a" style="left:496px;top:392px;width:20px;height:20px;background:#d5d2d5;"></div>
<div class="a" style="left:518px;top:392px;width:20px;height:20px;background:#d5d2d5;"></div>
<div class="a" style="left:540px;top:392px;width:20px;height:20px;background:#d5d2d5;"></div>
<div class="a" style="left:562px;top:392px;width:20px;height:20px;background:#d5d2d5;"></div>
<div class="a" style="left:584px;top:392px;width:20px;height:20px;background:#d5d2d5;"></div>
<div class="a" style="left:606px;top:392px;width:20px;height:20px;background:#d5d2d5;"></div>
<div class="a" style="left:628px;top:392px;width:20px;height:20px;background:#d5d2d5;"></div>
<div class="a" style="left:650px;top:392px;width:20px;height:20px;background:#d5d2d5;"></div>
<div class="a" style="left:672px;top:392px;width:20px;height:20px;background:#d5d2d5;"></div>
<div class="a" style="left:694px;top:392px;width:20px;height:20px;background:#d5d2d5;"></div>
<div class="a" style="left:716px;top:392px;width:20px;height:20px;background:#d5d2d5;"></div>
<div class="a" style="left:738px;top:392px;width:20px;height:20px;background:#d5d2d5;"></div>
<div class="a" style="left:0px;top:516px;width:1022px;height:8px;background:#d8d6d8;"></div>
<div class="a" style="left:0px;top:516px;width:1022px;height:1px;background:#000;"></div>
<div class="a" style="left:0px;top:523px;width:1022px;height:1px;background:#000;"></div>
<div class="a" style="left:0px;top:516px;width:1px;height:8px;background:#000;"></div>
<div class="a" style="left:1020px;top:516px;width:2px;height:8px;background:#000;"></div>
<div class="a" style="left:1px;top:517px;width:1019px;height:1px;background:#fbfafb;"></div>
<div class="a" style="left:1px;top:517px;width:1px;height:6px;background:#fbfafb;"></div>
<div class="t" style="left:-.4px;top:529px;letter-spacing:.3px"><u>T</u>onic:</div>
<div class="a" style="left:51px;top:525px;width:47px;height:27px;background:#dcdadc;box-shadow:inset 1px 1px 0 #8a888a, inset 2px 2px 0 #b9b7b9, inset -1px -1px 0 #f8f7f8"></div>
<div class="btn" style="left:81px;top:527px;width:15px;height:23px"></div>
<div class="t" style="left:55.4px;top:528.6px">C</div>
<div class="t" style="left:102.2px;top:529px"><u>M</u>ode:</div>
<div class="a" style="left:154px;top:525px;width:141px;height:27px;background:#dcdadc;box-shadow:inset 1px 1px 0 #8a888a, inset 2px 2px 0 #b9b7b9, inset -1px -1px 0 #f8f7f8"></div>
<div class="btn" style="left:278px;top:527px;width:15px;height:23px"></div>
<div class="t" style="left:158.8px;top:528.6px">&lt;no mode&gt;</div>
<div class="a" style="left:942px;top:525px;width:77px;height:26px;border:1px solid #8b898b;background:#d5d2d5;box-shadow:inset 1px 1px 0 #fbfafb, inset -1px -1px 0 #c6c4c6"></div>
<div class="t" style="left:945.8px;top:529px">Options...</div>
<svg width="1022" height="724" viewBox="0 0 1022 724" style="pointer-events:none">
<polygon points="84.5,536 92.5,536 88.5,540" fill="#000"/><polygon points="282.5,536 290.5,536 286.5,540" fill="#000"/>
</svg>
<svg width="1022" height="724" viewBox="0 0 1022 724">
<defs>
<filter id="wa" x="0" y="0" width="100%" height="100%" color-interpolation-filters="sRGB">
 <feTurbulence type="fractalNoise" baseFrequency="0.03 0.7" numOctaves="4" seed="5" result="n"/>
 <feColorMatrix in="n" type="matrix" values="0 0 0 0 0  0 0 0 0 0  0 0 0 0 0  0 0 0 3.4 -1.462" result="m"/>
 <feComposite in="m" in2="SourceGraphic" operator="in"/>
</filter>
<filter id="wb" x="0" y="0" width="100%" height="100%" color-interpolation-filters="sRGB">
 <feTurbulence type="fractalNoise" baseFrequency="0.014 0.34" numOctaves="4" seed="9" result="n"/>
 <feColorMatrix in="n" type="matrix" values="0 0 0 0 0  0 0 0 0 0  0 0 0 0 0  0 0 0 6 -3.27" result="m"/>
 <feComposite in="m" in2="SourceGraphic" operator="in"/>
</filter>
<filter id="wc" x="0" y="0" width="100%" height="100%" color-interpolation-filters="sRGB">
 <feTurbulence type="fractalNoise" baseFrequency="0.015 0.2" numOctaves="2" seed="13" result="n"/>
 <feColorMatrix in="n" type="matrix" values="0 0 0 0 0  0 0 0 0 0  0 0 0 0 0  0 0 0 3 -1.62" result="m"/>
 <feComposite in="m" in2="SourceGraphic" operator="in"/>
</filter>
<linearGradient id="gNut" x1="0" y1="0" x2="1" y2="0"><stop offset="0" stop-color="#b9b59a"/><stop offset=".33" stop-color="#c9c5a8"/><stop offset=".5" stop-color="#e6e3cc"/><stop offset=".75" stop-color="#fbfaf0"/><stop offset="1" stop-color="#ffffff"/></linearGradient>
<linearGradient id="gNutV" x1="0" y1="0" x2="0" y2="1"><stop offset="0" stop-color="#fff" stop-opacity=".35"/><stop offset=".3" stop-color="#fff" stop-opacity="0"/><stop offset="1" stop-color="#a8a480" stop-opacity=".22"/></linearGradient>
<linearGradient id="gNutB" x1="0" y1="0" x2="0" y2="1"><stop offset="0" stop-color="#121010"/><stop offset=".5" stop-color="#1e1a1c"/><stop offset="1" stop-color="#3a3431"/></linearGradient>
<linearGradient id="gFret" x1="0" y1="0" x2="1" y2="0"><stop offset="0" stop-color="#d8d0a4"/><stop offset=".35" stop-color="#f4f0d2"/><stop offset=".7" stop-color="#b4aa68"/><stop offset="1" stop-color="#7a722c"/></linearGradient>
<linearGradient id="gStr" x1="0" y1="0" x2="0" y2="1"><stop offset="0" stop-color="#b4b4b4"/><stop offset=".5" stop-color="#dedede"/><stop offset="1" stop-color="#aeaeae"/></linearGradient>
<linearGradient id="gShade" x1="0" y1="0" x2="0" y2="1"><stop offset="0" stop-color="#000" stop-opacity="0"/><stop offset=".55" stop-color="#000" stop-opacity=".05"/><stop offset="1" stop-color="#000" stop-opacity=".38"/></linearGradient>
<clipPath id="fb"><rect x="24" y="554" width="998" height="144"/></clipPath>
</defs>
<rect x="24" y="554" width="998" height="144" fill="#8a1b0a"/>
<g clip-path="url(#fb)"><g transform="rotate(4 500 626)"><rect x="-20" y="480" width="1080" height="300" fill="#b0340e" opacity=".6" filter="url(#wc)"/><rect x="-20" y="480" width="1080" height="300" fill="#3c0a02" opacity=".7" filter="url(#wa)"/><rect x="-20" y="480" width="1080" height="300" fill="#220300" filter="url(#wb)"/></g>
<rect x="24" y="554" width="79.5" height="144" fill="#1a0200" opacity="0.05"/>
<rect x="103.5" y="554" width="69.3" height="144" fill="#1a0200" opacity="0.12"/>
<rect x="172.8" y="554" width="64.7" height="144" fill="#1a0200" opacity="0.1"/>
<rect x="237.5" y="554" width="61.1" height="144" fill="#1a0200" opacity="0.12"/>
<rect x="298.6" y="554" width="58.4" height="144" fill="#1a0200" opacity="0.1"/>
<rect x="357" y="554" width="55" height="144" fill="#1a0200" opacity="0.1"/>
<rect x="412" y="554" width="51" height="144" fill="#1a0200" opacity="0.1"/>
<rect x="463" y="554" width="48" height="144" fill="#1a0200" opacity="0.05"/>
<rect x="511" y="554" width="46" height="144" fill="#1a0200" opacity="0"/>
<rect x="557" y="554" width="44" height="144" fill="#1a0200" opacity="0.18"/>
<rect x="601" y="554" width="41" height="144" fill="#1a0200" opacity="0.06"/>
<rect x="642" y="554" width="38" height="144" fill="#1a0200" opacity="0.1"/>
<rect x="680" y="554" width="36" height="144" fill="#1a0200" opacity="0"/>
<rect x="716" y="554" width="35" height="144" fill="#1a0200" opacity="0.06"/>
<rect x="751" y="554" width="32" height="144" fill="#1a0200" opacity="0"/>
<rect x="783" y="554" width="31" height="144" fill="#1a0200" opacity="0.12"/>
<rect x="814" y="554" width="29" height="144" fill="#1a0200" opacity="0.18"/>
<rect x="843" y="554" width="27" height="144" fill="#1a0200" opacity="0.06"/>
<rect x="870" y="554" width="26" height="144" fill="#1a0200" opacity="0.18"/>
<rect x="896" y="554" width="24" height="144" fill="#1a0200" opacity="0.05"/>
<rect x="920" y="554" width="23" height="144" fill="#1a0200" opacity="0"/>
<rect x="943" y="554" width="22" height="144" fill="#1a0200" opacity="0.05"/>
<rect x="965" y="554" width="20" height="144" fill="#1a0200" opacity="0.06"/>
<rect x="985" y="554" width="19" height="144" fill="#1a0200" opacity="0"/>
<rect x="1004" y="554" width="18" height="144" fill="#1a0200" opacity="0.1"/>
<rect x="24" y="554" width="998" height="144" fill="url(#gShade)"/>
</g>
<rect x="0" y="554" width="24" height="144" fill="url(#gNut)"/>
<rect x="8" y="554" width="16" height="144" fill="url(#gNutV)"/>
<polygon points="0,557.6 8,559.4 8,693.2 0,692.2" fill="url(#gNutB)"/>
<rect x="6.6" y="560" width="1.4" height="132" fill="#3c2228" opacity=".8"/>
<polygon points="0,554 9,554 9,559.4 0,557.6" fill="#f6f5ee"/><polygon points="0,692.2 8,693.2 8,698 0,698" fill="#deded6"/>
<rect x="0" y="679" width="2" height="1.4" fill="#e8e8e0"/>
<rect x="101" y="554" width="1" height="144" fill="#3c2806" opacity=".75"/>
<rect x="102" y="554" width="1" height="144" fill="#d6cfa4"/>
<rect x="103" y="554" width="1" height="144" fill="#eee9cc"/>
<rect x="104" y="554" width="1" height="144" fill="#b7ae78"/>
<rect x="105" y="554" width="1" height="144" fill="#7e7638"/>
<rect x="106" y="554" width="1" height="144" fill="#2c1a04" opacity=".6"/>
<rect x="170" y="554" width="1" height="144" fill="#3c2806" opacity=".75"/>
<rect x="171" y="554" width="1" height="144" fill="#d6cfa4"/>
<rect x="172" y="554" width="1" height="144" fill="#eee9cc"/>
<rect x="173" y="554" width="1" height="144" fill="#b7ae78"/>
<rect x="174" y="554" width="1" height="144" fill="#7e7638"/>
<rect x="175" y="554" width="1" height="144" fill="#2c1a04" opacity=".6"/>
<rect x="235" y="554" width="1" height="144" fill="#3c2806" opacity=".75"/>
<rect x="236" y="554" width="1" height="144" fill="#d6cfa4"/>
<rect x="237" y="554" width="1" height="144" fill="#eee9cc"/>
<rect x="238" y="554" width="1" height="144" fill="#b7ae78"/>
<rect x="239" y="554" width="1" height="144" fill="#7e7638"/>
<rect x="240" y="554" width="1" height="144" fill="#2c1a04" opacity=".6"/>
<rect x="296" y="554" width="1" height="144" fill="#3c2806" opacity=".75"/>
<rect x="297" y="554" width="1" height="144" fill="#d6cfa4"/>
<rect x="298" y="554" width="1" height="144" fill="#eee9cc"/>
<rect x="299" y="554" width="1" height="144" fill="#b7ae78"/>
<rect x="300" y="554" width="1" height="144" fill="#7e7638"/>
<rect x="301" y="554" width="1" height="144" fill="#2c1a04" opacity=".6"/>
<rect x="354" y="554" width="1" height="144" fill="#3c2806" opacity=".75"/>
<rect x="355" y="554" width="1" height="144" fill="#d6cfa4"/>
<rect x="356" y="554" width="1" height="144" fill="#eee9cc"/>
<rect x="357" y="554" width="1" height="144" fill="#b7ae78"/>
<rect x="358" y="554" width="1" height="144" fill="#7e7638"/>
<rect x="359" y="554" width="1" height="144" fill="#2c1a04" opacity=".6"/>
<rect x="409" y="554" width="1" height="144" fill="#3c2806" opacity=".75"/>
<rect x="410" y="554" width="1" height="144" fill="#d6cfa4"/>
<rect x="411" y="554" width="1" height="144" fill="#eee9cc"/>
<rect x="412" y="554" width="1" height="144" fill="#b7ae78"/>
<rect x="413" y="554" width="1" height="144" fill="#7e7638"/>
<rect x="414" y="554" width="1" height="144" fill="#2c1a04" opacity=".6"/>
<rect x="460" y="554" width="1" height="144" fill="#3c2806" opacity=".75"/>
<rect x="461" y="554" width="1" height="144" fill="#d6cfa4"/>
<rect x="462" y="554" width="1" height="144" fill="#eee9cc"/>
<rect x="463" y="554" width="1" height="144" fill="#b7ae78"/>
<rect x="464" y="554" width="1" height="144" fill="#7e7638"/>
<rect x="465" y="554" width="1" height="144" fill="#2c1a04" opacity=".6"/>
<rect x="508" y="554" width="1" height="144" fill="#3c2806" opacity=".75"/>
<rect x="509" y="554" width="1" height="144" fill="#d6cfa4"/>
<rect x="510" y="554" width="1" height="144" fill="#eee9cc"/>
<rect x="511" y="554" width="1" height="144" fill="#b7ae78"/>
<rect x="512" y="554" width="1" height="144" fill="#7e7638"/>
<rect x="513" y="554" width="1" height="144" fill="#2c1a04" opacity=".6"/>
<rect x="554" y="554" width="1" height="144" fill="#3c2806" opacity=".75"/>
<rect x="555" y="554" width="1" height="144" fill="#d6cfa4"/>
<rect x="556" y="554" width="1" height="144" fill="#eee9cc"/>
<rect x="557" y="554" width="1" height="144" fill="#b7ae78"/>
<rect x="558" y="554" width="1" height="144" fill="#7e7638"/>
<rect x="559" y="554" width="1" height="144" fill="#2c1a04" opacity=".6"/>
<rect x="598" y="554" width="1" height="144" fill="#3c2806" opacity=".75"/>
<rect x="599" y="554" width="1" height="144" fill="#d6cfa4"/>
<rect x="600" y="554" width="1" height="144" fill="#eee9cc"/>
<rect x="601" y="554" width="1" height="144" fill="#b7ae78"/>
<rect x="602" y="554" width="1" height="144" fill="#7e7638"/>
<rect x="603" y="554" width="1" height="144" fill="#2c1a04" opacity=".6"/>
<rect x="639" y="554" width="1" height="144" fill="#3c2806" opacity=".75"/>
<rect x="640" y="554" width="1" height="144" fill="#d6cfa4"/>
<rect x="641" y="554" width="1" height="144" fill="#eee9cc"/>
<rect x="642" y="554" width="1" height="144" fill="#b7ae78"/>
<rect x="643" y="554" width="1" height="144" fill="#7e7638"/>
<rect x="644" y="554" width="1" height="144" fill="#2c1a04" opacity=".6"/>
<rect x="677" y="554" width="1" height="144" fill="#3c2806" opacity=".75"/>
<rect x="678" y="554" width="1" height="144" fill="#d6cfa4"/>
<rect x="679" y="554" width="1" height="144" fill="#eee9cc"/>
<rect x="680" y="554" width="1" height="144" fill="#b7ae78"/>
<rect x="681" y="554" width="1" height="144" fill="#7e7638"/>
<rect x="682" y="554" width="1" height="144" fill="#2c1a04" opacity=".6"/>
<rect x="713" y="554" width="1" height="144" fill="#3c2806" opacity=".75"/>
<rect x="714" y="554" width="1" height="144" fill="#d6cfa4"/>
<rect x="715" y="554" width="1" height="144" fill="#eee9cc"/>
<rect x="716" y="554" width="1" height="144" fill="#b7ae78"/>
<rect x="717" y="554" width="1" height="144" fill="#7e7638"/>
<rect x="718" y="554" width="1" height="144" fill="#2c1a04" opacity=".6"/>
<rect x="748" y="554" width="1" height="144" fill="#3c2806" opacity=".75"/>
<rect x="749" y="554" width="1" height="144" fill="#d6cfa4"/>
<rect x="750" y="554" width="1" height="144" fill="#eee9cc"/>
<rect x="751" y="554" width="1" height="144" fill="#b7ae78"/>
<rect x="752" y="554" width="1" height="144" fill="#7e7638"/>
<rect x="753" y="554" width="1" height="144" fill="#2c1a04" opacity=".6"/>
<rect x="780" y="554" width="1" height="144" fill="#3c2806" opacity=".75"/>
<rect x="781" y="554" width="1" height="144" fill="#d6cfa4"/>
<rect x="782" y="554" width="1" height="144" fill="#eee9cc"/>
<rect x="783" y="554" width="1" height="144" fill="#b7ae78"/>
<rect x="784" y="554" width="1" height="144" fill="#7e7638"/>
<rect x="785" y="554" width="1" height="144" fill="#2c1a04" opacity=".6"/>
<rect x="811" y="554" width="1" height="144" fill="#3c2806" opacity=".75"/>
<rect x="812" y="554" width="1" height="144" fill="#d6cfa4"/>
<rect x="813" y="554" width="1" height="144" fill="#eee9cc"/>
<rect x="814" y="554" width="1" height="144" fill="#b7ae78"/>
<rect x="815" y="554" width="1" height="144" fill="#7e7638"/>
<rect x="816" y="554" width="1" height="144" fill="#2c1a04" opacity=".6"/>
<rect x="840" y="554" width="1" height="144" fill="#3c2806" opacity=".75"/>
<rect x="841" y="554" width="1" height="144" fill="#d6cfa4"/>
<rect x="842" y="554" width="1" height="144" fill="#eee9cc"/>
<rect x="843" y="554" width="1" height="144" fill="#b7ae78"/>
<rect x="844" y="554" width="1" height="144" fill="#7e7638"/>
<rect x="845" y="554" width="1" height="144" fill="#2c1a04" opacity=".6"/>
<rect x="867" y="554" width="1" height="144" fill="#3c2806" opacity=".75"/>
<rect x="868" y="554" width="1" height="144" fill="#d6cfa4"/>
<rect x="869" y="554" width="1" height="144" fill="#eee9cc"/>
<rect x="870" y="554" width="1" height="144" fill="#b7ae78"/>
<rect x="871" y="554" width="1" height="144" fill="#7e7638"/>
<rect x="872" y="554" width="1" height="144" fill="#2c1a04" opacity=".6"/>
<rect x="893" y="554" width="1" height="144" fill="#3c2806" opacity=".75"/>
<rect x="894" y="554" width="1" height="144" fill="#d6cfa4"/>
<rect x="895" y="554" width="1" height="144" fill="#eee9cc"/>
<rect x="896" y="554" width="1" height="144" fill="#b7ae78"/>
<rect x="897" y="554" width="1" height="144" fill="#7e7638"/>
<rect x="898" y="554" width="1" height="144" fill="#2c1a04" opacity=".6"/>
<rect x="917" y="554" width="1" height="144" fill="#3c2806" opacity=".75"/>
<rect x="918" y="554" width="1" height="144" fill="#d6cfa4"/>
<rect x="919" y="554" width="1" height="144" fill="#eee9cc"/>
<rect x="920" y="554" width="1" height="144" fill="#b7ae78"/>
<rect x="921" y="554" width="1" height="144" fill="#7e7638"/>
<rect x="922" y="554" width="1" height="144" fill="#2c1a04" opacity=".6"/>
<rect x="940" y="554" width="1" height="144" fill="#3c2806" opacity=".75"/>
<rect x="941" y="554" width="1" height="144" fill="#d6cfa4"/>
<rect x="942" y="554" width="1" height="144" fill="#eee9cc"/>
<rect x="943" y="554" width="1" height="144" fill="#b7ae78"/>
<rect x="944" y="554" width="1" height="144" fill="#7e7638"/>
<rect x="945" y="554" width="1" height="144" fill="#2c1a04" opacity=".6"/>
<rect x="962" y="554" width="1" height="144" fill="#3c2806" opacity=".75"/>
<rect x="963" y="554" width="1" height="144" fill="#d6cfa4"/>
<rect x="964" y="554" width="1" height="144" fill="#eee9cc"/>
<rect x="965" y="554" width="1" height="144" fill="#b7ae78"/>
<rect x="966" y="554" width="1" height="144" fill="#7e7638"/>
<rect x="967" y="554" width="1" height="144" fill="#2c1a04" opacity=".6"/>
<rect x="982" y="554" width="1" height="144" fill="#3c2806" opacity=".75"/>
<rect x="983" y="554" width="1" height="144" fill="#d6cfa4"/>
<rect x="984" y="554" width="1" height="144" fill="#eee9cc"/>
<rect x="985" y="554" width="1" height="144" fill="#b7ae78"/>
<rect x="986" y="554" width="1" height="144" fill="#7e7638"/>
<rect x="987" y="554" width="1" height="144" fill="#2c1a04" opacity=".6"/>
<rect x="1001" y="554" width="1" height="144" fill="#3c2806" opacity=".75"/>
<rect x="1002" y="554" width="1" height="144" fill="#d6cfa4"/>
<rect x="1003" y="554" width="1" height="144" fill="#eee9cc"/>
<rect x="1004" y="554" width="1" height="144" fill="#b7ae78"/>
<rect x="1005" y="554" width="1" height="144" fill="#7e7638"/>
<rect x="1006" y="554" width="1" height="144" fill="#2c1a04" opacity=".6"/>
<circle cx="205" cy="626" r="6.4" fill="#d3dbe3" stroke="#0a0a14" stroke-width="1"/>
<circle cx="327" cy="626" r="6.4" fill="#d3dbe3" stroke="#0a0a14" stroke-width="1"/>
<circle cx="435.5" cy="626" r="6.4" fill="#d3dbe3" stroke="#0a0a14" stroke-width="1"/>
<circle cx="533" cy="626" r="6.4" fill="#d3dbe3" stroke="#0a0a14" stroke-width="1"/>
<circle cx="766" cy="626" r="6.4" fill="#d3dbe3" stroke="#0a0a14" stroke-width="1"/>
<circle cx="827" cy="626" r="6.4" fill="#d3dbe3" stroke="#0a0a14" stroke-width="1"/>
<circle cx="882" cy="626" r="6.4" fill="#d3dbe3" stroke="#0a0a14" stroke-width="1"/>
<circle cx="930" cy="626" r="6.4" fill="#d3dbe3" stroke="#0a0a14" stroke-width="1"/>
<circle cx="660" cy="602" r="6.4" fill="#d3dbe3" stroke="#0a0a14" stroke-width="1"/>
<circle cx="660" cy="650" r="6.4" fill="#d3dbe3" stroke="#0a0a14" stroke-width="1"/>
<circle cx="994" cy="602" r="6.4" fill="#d3dbe3" stroke="#0a0a14" stroke-width="1"/>
<circle cx="994" cy="650" r="6.4" fill="#d3dbe3" stroke="#0a0a14" stroke-width="1"/>
<rect x="0" y="565" width="1022" height="1" fill="#a2a2a2"/>
<rect x="0" y="566" width="1022" height="1" fill="#d8d8d8"/>
<rect x="0" y="567" width="1022" height="1" fill="#a9a9a9"/>
<rect x="0" y="589" width="1022" height="1" fill="#a2a2a2"/>
<rect x="0" y="590" width="1022" height="1" fill="#d8d8d8"/>
<rect x="0" y="591" width="1022" height="1" fill="#a9a9a9"/>
<rect x="0" y="613" width="1022" height="1" fill="#a2a2a2"/>
<rect x="0" y="614" width="1022" height="1" fill="#d8d8d8"/>
<rect x="0" y="615" width="1022" height="1" fill="#a9a9a9"/>
<rect x="0" y="637" width="1022" height="1" fill="#a2a2a2"/>
<rect x="0" y="638" width="1022" height="1" fill="#d8d8d8"/>
<rect x="0" y="639" width="1022" height="1" fill="#a9a9a9"/>
<rect x="0" y="661" width="1022" height="1" fill="#a2a2a2"/>
<rect x="0" y="662" width="1022" height="1" fill="#d8d8d8"/>
<rect x="0" y="663" width="1022" height="1" fill="#a9a9a9"/>
<rect x="0" y="685" width="1022" height="1" fill="#a2a2a2"/>
<rect x="0" y="686" width="1022" height="1" fill="#d8d8d8"/>
<rect x="0" y="687" width="1022" height="1" fill="#a9a9a9"/>
<circle cx="435.8" cy="566" r="7.3" fill="#2d50f2" stroke="#0c1c80" stroke-width=".8"/>
</svg>
</body></html>
